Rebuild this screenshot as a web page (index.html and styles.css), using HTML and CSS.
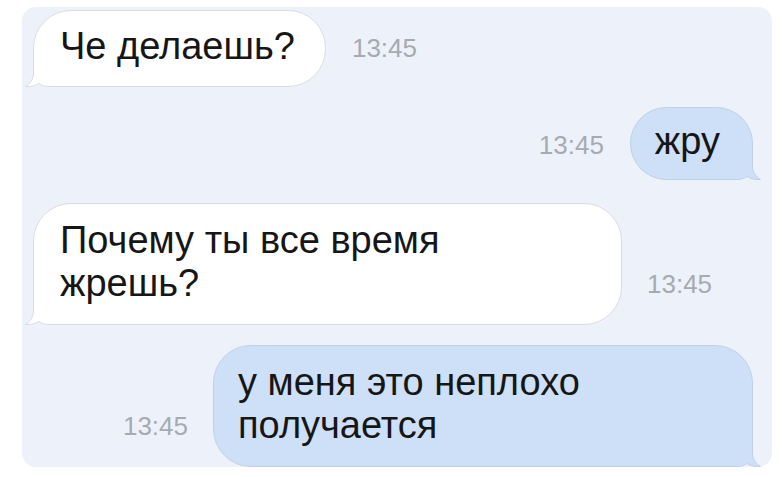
FILE: index.html
```html
<!DOCTYPE html>
<html lang="ru">
  <head>
    <meta charset="UTF-8" />
    <meta name="viewport" content="width=device-width, initial-scale=1.0" />
    <title>Чат</title>

    <link rel="stylesheet" href="styles.css">
  </head>
  <body>
    <div class="chat">
      <div class="row row-in first">
        <div class="bubble in">
          Че делаешь?
          <svg class="tail" viewBox="0 0 24 24"><rect class="tail-bg" width="24" height="24" /><path class="tail-fill" d="M8.5 0 L8.5 10 C8.5 16 5 21 0.5 23.5 C6 24 11 22.5 14 20.5 C17 22.5 20 23.5 24 23.5 L24 0 Z" /><path class="tail-line" d="M8.5 0 L8.5 10 C8.5 16 5 21 0.5 23.5 C6 24 11 22.5 14 20.5 C17 22.5 20 23.5 24 23.5" /></svg>
        </div>
        <span class="time">13:45</span>
      </div>

      <div class="row row-out second">
        <span class="time">13:45</span>
        <div class="bubble out">
          жру
          <svg class="tail" viewBox="0 0 24 24"><rect class="tail-bg" width="24" height="24" /><path class="tail-fill" d="M8.5 0 L8.5 10 C8.5 16 5 21 0.5 23.5 C6 24 11 22.5 14 20.5 C17 22.5 20 23.5 24 23.5 L24 0 Z" /><path class="tail-line" d="M8.5 0 L8.5 10 C8.5 16 5 21 0.5 23.5 C6 24 11 22.5 14 20.5 C17 22.5 20 23.5 24 23.5" /></svg>
        </div>
      </div>

      <div class="row row-in third">
        <div class="bubble in wide">
          Почему ты все время<br />жрешь?
          <svg class="tail" viewBox="0 0 24 24"><rect class="tail-bg" width="24" height="24" /><path class="tail-fill" d="M8.5 0 L8.5 10 C8.5 16 5 21 0.5 23.5 C6 24 11 22.5 14 20.5 C17 22.5 20 23.5 24 23.5 L24 0 Z" /><path class="tail-line" d="M8.5 0 L8.5 10 C8.5 16 5 21 0.5 23.5 C6 24 11 22.5 14 20.5 C17 22.5 20 23.5 24 23.5" /></svg>
        </div>
        <span class="time late">13:45</span>
      </div>

      <div class="row row-out fourth">
        <span class="time late">13:45</span>
        <div class="bubble out long">
          у меня это неплохо<br />получается
          <svg class="tail" viewBox="0 0 24 24"><rect class="tail-bg" width="24" height="24" /><path class="tail-fill" d="M8.5 0 L8.5 10 C8.5 16 5 21 0.5 23.5 C6 24 11 22.5 14 20.5 C17 22.5 20 23.5 24 23.5 L24 0 Z" /><path class="tail-line" d="M8.5 0 L8.5 10 C8.5 16 5 21 0.5 23.5 C6 24 11 22.5 14 20.5 C17 22.5 20 23.5 24 23.5" /></svg>
        </div>
      </div>
    </div>
  </body>
</html>
```

FILE: styles.css
```css
body {
  margin: 0;
  background-color: #ffffff;
  font-family: "Liberation Sans", Arial, sans-serif;
}

.chat {
  margin: 7px 0 0 22px;
  width: 750px;
  height: 460px;
  box-sizing: border-box;
  padding: 3px 19px 0 11px;
  background-color: #edf2fa;
  border-radius: 14px;
  overflow: hidden;
  display: flex;
  flex-direction: column;
}

.row {
  display: flex;
  align-items: flex-end;
  gap: 26px;
}

.row-out {
  justify-content: flex-end;
  gap: 26px;
}

.second {
  margin-top: 20px;
}

.third {
  margin-top: 23px;
  gap: 25px;
}

.fourth {
  margin-top: 20px;
  gap: 25px;
}

.bubble {
  position: relative;
  box-sizing: border-box;
  font-size: 38px;
  line-height: 43px;
  color: #161616;
  border: 1px solid #d8dce2;
  border-radius: 38px;
  padding: 14px 30px 18px 26px;
}

.bubble.in {
  background-color: #ffffff;
  border-bottom-left-radius: 0;
}

.bubble.out {
  background-color: #cee0f7;
  border-color: #bfd0e5;
  border-bottom-right-radius: 0;
  padding: 12px 32px 16px 24px;
}

.bubble.wide {
  width: 589px;
  padding-top: 15px;
  padding-bottom: 19px;
}

.bubble.long {
  width: 540px;
  padding-top: 15px;
  padding-bottom: 19px;
}

.time {
  font-size: 26px;
  color: #a6abb1;
  margin-bottom: 19px;
}

.first .time {
  margin-bottom: 23px;
}

.time.late {
  margin-bottom: 25px;
}

.tail {
  position: absolute;
  bottom: -1px;
  width: 24px;
  height: 24px;
}

.bubble.in .tail {
  left: -9px;
}

.bubble.out .tail {
  right: -9px;
  transform: scaleX(-1);
}

.tail-bg {
  fill: #edf2fa;
}

.tail-line {
  fill: none;
  stroke: #d8dce2;
  stroke-width: 1;
}

.in .tail-fill {
  fill: #ffffff;
}

.out .tail-fill {
  fill: #cee0f7;
}

.out .tail-line {
  stroke: #bfd0e5;
}
```
